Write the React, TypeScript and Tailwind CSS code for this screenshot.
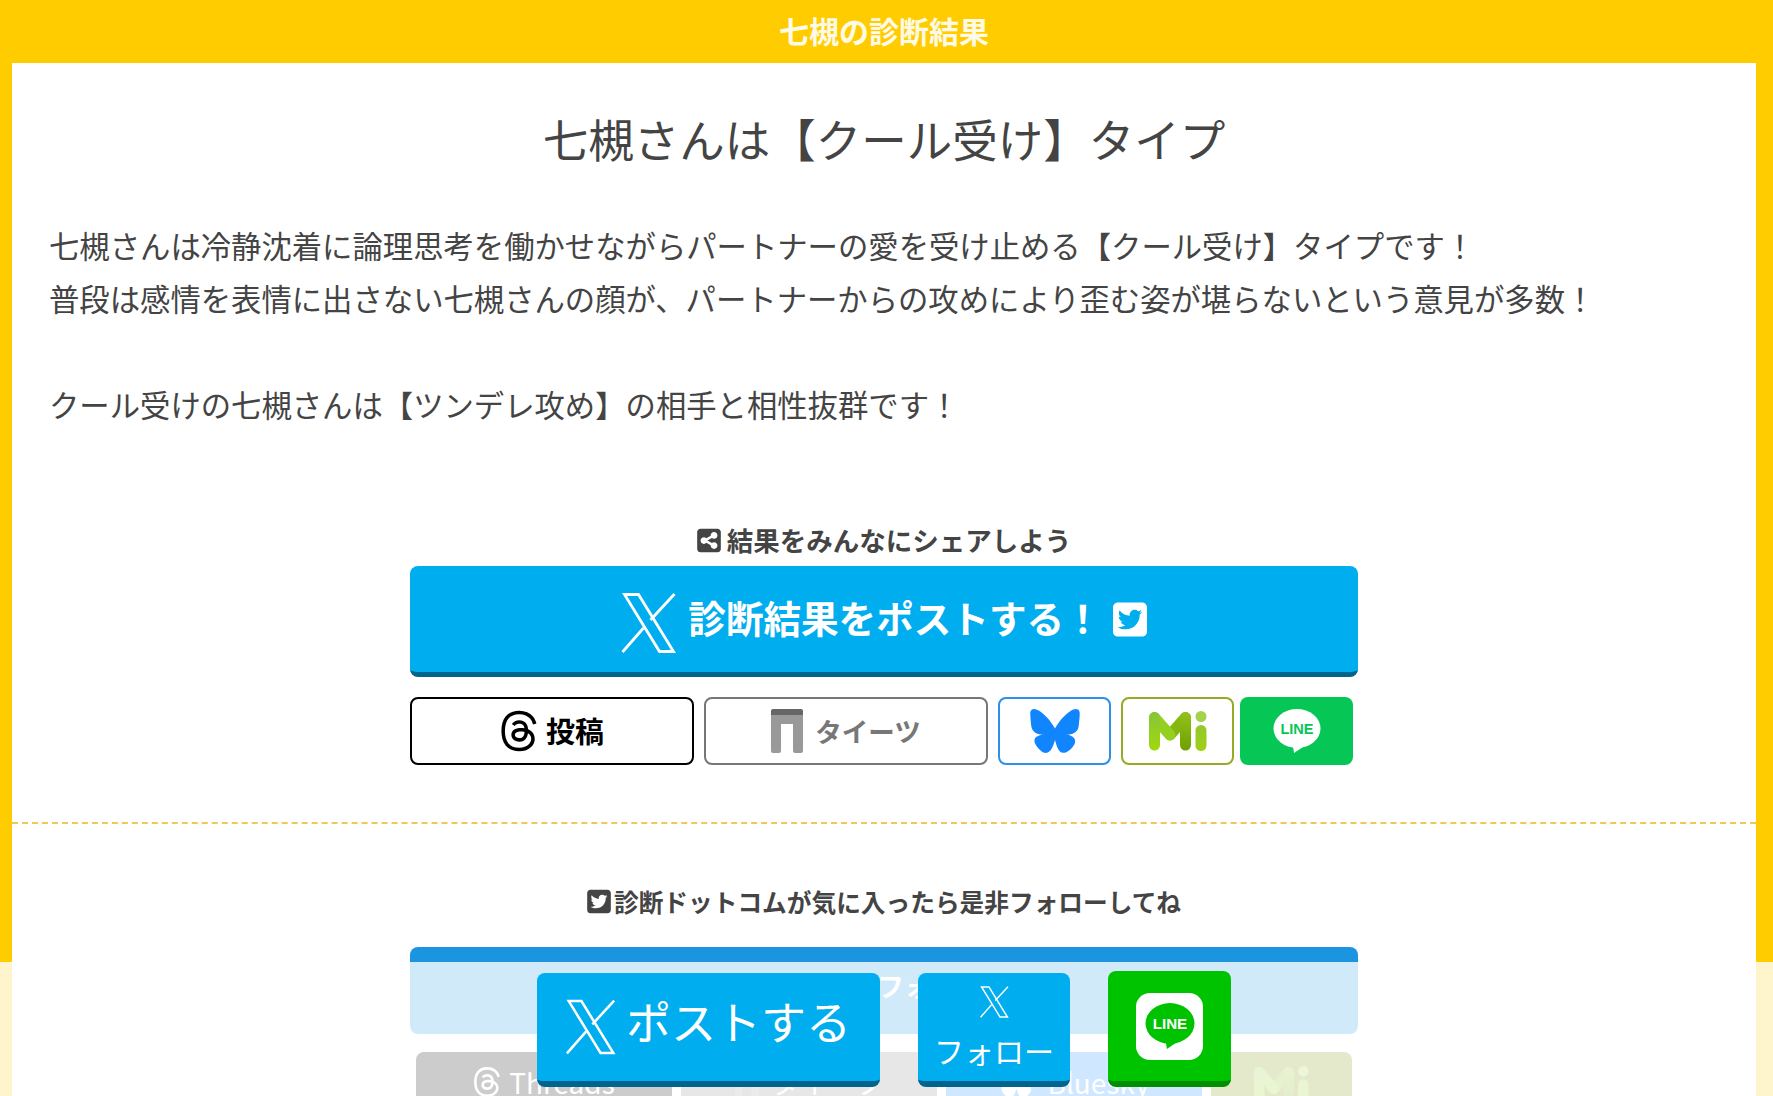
import { FaSquareShareNodes, FaSquareTwitter, FaThreads, FaBluesky } from "react-icons/fa6"

// thin outlined X, the stock path is too heavy at this size
const XLogo = ({ className }: { className: string }) => (
  <svg viewBox="0 0 55 60" className={className} fill="none" stroke="currentColor" strokeWidth="2.8">
    <path d="M3 1.5h14l35 57H38z" />
    <path d="M53 1L29 27M22 35L1 59" />
  </svg>
)

const TeatsuLogo = ({ className }: { className: string }) => (
  <svg viewBox="0 0 32 44" className={className}>
    <path d="M2 0h28a2 2 0 0 1 2 2v4H0V2a2 2 0 0 1 2-2z" fill="#666" />
    <path d="M0 6h32v36a2 2 0 0 1-2 2h-6a2 2 0 0 1-2-2V15H10v27a2 2 0 0 1-2 2H2a2 2 0 0 1-2-2z" fill="#999" />
  </svg>
)

const MisskeyLogo = ({ className }: { className: string }) => (
  <svg viewBox="0 0 58 40" className={className}>
    <defs>
      <linearGradient id="mi-left" gradientUnits="userSpaceOnUse" x1="0" y1="0" x2="0" y2="40">
        <stop offset="0" stopColor="#86c43a" />
        <stop offset="1" stopColor="#a1d90c" />
      </linearGradient>
      <linearGradient id="mi-right" gradientUnits="userSpaceOnUse" x1="0" y1="0" x2="0" y2="40">
        <stop offset="0" stopColor="#92c41c" />
        <stop offset="1" stopColor="#6f9f00" />
      </linearGradient>
      <linearGradient id="mi-stem" gradientUnits="userSpaceOnUse" x1="0" y1="0" x2="0" y2="40">
        <stop offset="0" stopColor="#8cc63a" />
        <stop offset="1" stopColor="#a0d015" />
      </linearGradient>
    </defs>
    <path d="M36.5 6.5L21 24" fill="none" stroke="#84b80e" strokeWidth="11" strokeLinecap="round" />
    <path d="M36.5 6.5V34" fill="none" stroke="url(#mi-right)" strokeWidth="11" strokeLinecap="round" />
    <path d="M5.5 6.5L21 24" fill="none" stroke="#95d020" strokeWidth="11" strokeLinecap="round" />
    <path d="M5.5 6.5V34" fill="none" stroke="url(#mi-left)" strokeWidth="11" strokeLinecap="round" />
    <circle cx="52" cy="5.5" r="5.5" fill="#a4d24c" />
    <rect x="46.5" y="14" width="11" height="26" rx="5.5" fill="url(#mi-stem)" />
  </svg>
)

const LineBubble = ({ className, bubble, label }: { className: string; bubble: string; label: string }) => (
  <svg viewBox="0 0 48 44" className={className}>
    <ellipse cx="24" cy="19.5" rx="23.5" ry="19.5" fill={bubble} />
    <path d="M20 37l1 7 12-8z" fill={bubble} />
    <text x="24" y="24.5" textAnchor="middle" fontSize="14.5" fontWeight="700" fill={label} fontFamily="'Liberation Sans', sans-serif">
      LINE
    </text>
  </svg>
)

export default function App() {
  return (
    <div className="relative h-screen overflow-hidden bg-[#ffcc00] pr-[17px] pl-3 font-['Noto_Sans_CJK_JP','Noto_Sans',sans-serif] text-[#444]">
      <header className="flex h-[63px] items-center justify-center pb-[2px] text-[30px] font-bold text-white/90">
        七槻の診断結果
      </header>

      <main className="bg-white pb-20">
        <h2 className="pt-[43px] text-center text-[45.5px] leading-[64px] font-normal">
          七槻さんは【クール受け】タイプ
        </h2>

        <div className="px-[37px] pt-[49px] text-[30.35px] leading-[53px] font-normal">
          <p>七槻さんは冷静沈着に論理思考を働かせながらパートナーの愛を受け止める【クール受け】タイプです！</p>
          <p>普段は感情を表情に出さない七槻さんの顔が、パートナーからの攻めにより歪む姿が堪らないという意見が多数！</p>
          <p className="mt-[53px]">クール受けの七槻さんは【ツンデレ攻め】の相手と相性抜群です！</p>
        </div>

        <div className="mx-auto w-[948px] pt-[91px]">
          <div className="flex items-center justify-center gap-[6px] text-[26.5px] leading-[36px] font-semibold">
            <FaSquareShareNodes className="h-[27px] w-[24px]" />
            <span>結果をみんなにシェアしよう</span>
          </div>

          <a className="mt-2 flex h-[111px] items-center justify-center gap-[11px] rounded-lg border-b-[5px] border-[#00648c] bg-[#00adef] text-[37.6px] font-semibold text-white">
            <XLogo className="mt-[8px] h-[60px] w-[56px]" />
            <span className="-mt-[3px]">診断結果をポストする！</span>
            <FaSquareTwitter className="h-[39px] w-[34px]" />
          </a>

          <div className="mt-5 flex h-[68px] text-[29px] font-bold">
            <a className="flex w-[284px] items-center justify-center gap-2 rounded-lg border-2 border-black text-black">
              <FaThreads className="h-[44px] w-[38px]" />
              投稿
            </a>
            <a className="ml-[10px] flex w-[284px] items-center justify-center gap-3 rounded-lg border-2 border-[#777] text-[26.5px] text-[#777]">
              <TeatsuLogo className="h-[44px] w-[32px]" />
              タイーツ
            </a>
            <a className="ml-[10px] flex w-[113px] items-center justify-center rounded-lg border-2 border-[#2d8fe6] text-[#1185fe]">
              <FaBluesky className="h-[44px] w-[50px]" />
            </a>
            <a className="ml-[10px] flex w-[113px] items-center justify-center rounded-lg border-2 border-[#96ab24]">
              <MisskeyLogo className="h-[40px] w-[58px]" />
            </a>
            <a className="ml-[6px] flex w-[113px] items-center justify-center rounded-lg bg-[#06c755]">
              <LineBubble className="h-[44px] w-[48px]" bubble="#fff" label="#06c755" />
            </a>
          </div>
        </div>

        <div className="mt-[57px] border-t-2 border-dashed border-[#ecca55]" />

        <div className="mx-auto w-[948px] pt-[59px]">
          <div className="flex items-center justify-center gap-[3px] text-[24.7px] leading-[36px] font-semibold">
            <FaSquareTwitter className="h-[27px] w-[24px]" />
            <span>診断ドットコムが気に入ったら是非フォローしてね</span>
          </div>

          <a className="mt-[28px] flex h-[87px] items-center justify-center rounded-lg bg-[#1b95e0] pb-[8px] pl-[94px] text-[27px] font-semibold text-white">
            フォロー
          </a>

          <div className="mt-[18px] flex h-[60px] justify-center gap-[9px] text-[28px] text-white">
            <a className="flex w-[256px] items-center justify-center gap-2 rounded-lg bg-black">
              <FaThreads className="h-[32px] w-[28px]" />
              Threads
            </a>
            <a className="flex w-[256px] items-center justify-center gap-3 rounded-lg bg-[#888]">
              <TeatsuLogo className="h-[34px] w-[24px]" />
              タイーツ
            </a>
            <a className="flex w-[256px] items-center justify-center gap-3 rounded-lg bg-[#1185fe]">
              <FaBluesky className="h-[32px] w-[37px]" />
              Bluesky
            </a>
            <a className="flex w-[141px] items-start justify-center rounded-lg bg-[#7a9100] pt-[14px]">
              <MisskeyLogo className="h-[38px] w-[55px]" />
            </a>
          </div>
        </div>
      </main>

      <div className="absolute inset-x-0 bottom-0 flex h-[134px] items-end justify-center bg-white/80 pr-[5px] pb-[9px] text-white">
        <a className="flex h-[114px] w-[343px] items-center justify-center gap-[10px] rounded-lg border-b-[6px] border-[#00648c] bg-[#00adef] text-[45px] font-normal">
          <XLogo className="h-[56px] w-[50px]" />
          <span className="-mt-[12px]">ポストする</span>
        </a>
        <a className="ml-[38px] flex h-[114px] w-[152px] flex-col items-center justify-center rounded-lg border-b-[6px] border-[#00648c] bg-[#00adef] pt-[7px] text-[30px] leading-[50px] font-normal">
          <XLogo className="h-[32px] w-[29px]" />
          <span className="mt-[7px]">フォロー</span>
        </a>
        <a className="ml-[38px] flex h-[116px] w-[123px] items-center justify-center rounded-lg border-b-[6px] border-[#008f00] bg-[#00c300]">
          <span className="flex h-[67px] w-[67px] items-center justify-center rounded-[14px] bg-white">
            <LineBubble className="h-[46px] w-[50px]" bubble="#00c300" label="#fff" />
          </span>
        </a>
      </div>
    </div>
  )
}
